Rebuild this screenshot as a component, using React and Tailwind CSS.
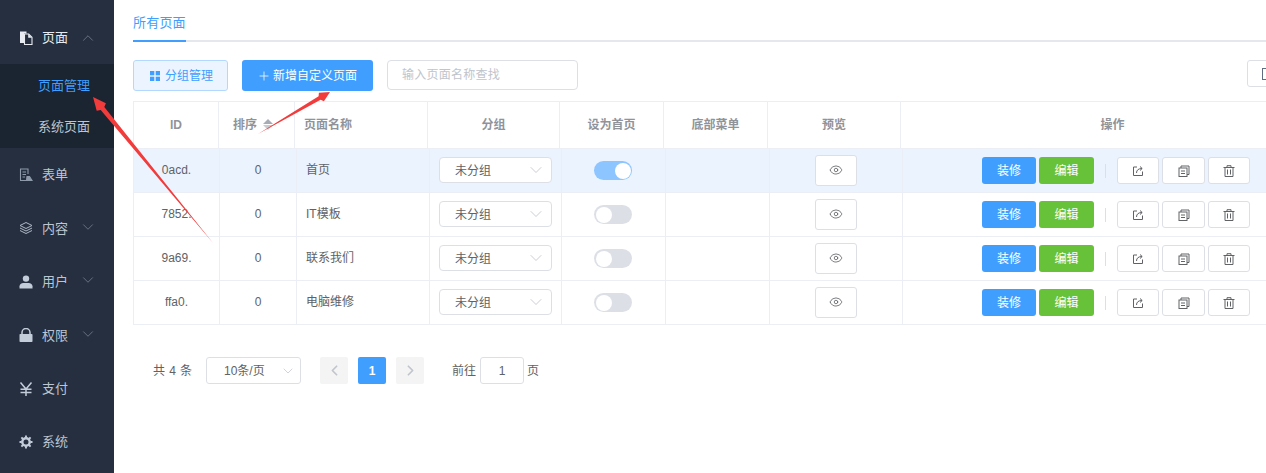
import React from 'react';
import { ChevronDown, ChevronLeft, ChevronRight, ChevronUp, Eye, Plus } from 'lucide-react';

const rows = [
  { id: '0acd.', name: '首页', active: true },
  { id: '7852.', name: 'IT模板' },
  { id: '9a69.', name: '联系我们' },
  { id: 'ffa0.', name: '电脑维修' },
];

function PagesIcon() {
  return (
    <svg viewBox="0 0 14 14" className="w-[14px] h-[14px]">
      <path d="M1 0.5h6.5v2H5v9.5H1z" fill="#e8ecf2" />
      <path d="M5.5 3h4.2l3.3 3.3V13.5H5.5z" fill="none" stroke="#e8ecf2" strokeWidth="1.1" />
      <path d="M9.2 3v3.8H13z" fill="#e8ecf2" />
    </svg>
  );
}

function FormIcon() {
  return (
    <svg viewBox="0 0 14 14" className="w-[14px] h-[14px]" fill="none" stroke="#8e99a9" strokeWidth="1.1">
      <path d="M8.5 12.5H1.5V1h7.5v5" />
      <path d="M3.5 4h3.5M3.5 6.5h3.5M3.5 9h2.5" />
      <path d="M8 8.5h2.5l2.5 4H7.5z" fill="#8e99a9" />
    </svg>
  );
}

function LayersIcon() {
  return (
    <svg viewBox="0 0 14 14" className="w-[14px] h-[14px]" fill="none" stroke="#aeb8c6" strokeWidth="1">
      <path d="M7 1.5l6 3-6 3-6-3z" />
      <path d="M1 7l6 3 6-3" />
      <path d="M1 9.5l6 3 6-3" />
    </svg>
  );
}

function UserIcon() {
  return (
    <svg viewBox="0 0 14 14" className="w-[14px] h-[14px]" fill="#c3ccd9">
      <circle cx="7" cy="3.6" r="3.2" />
      <path d="M0.5 13.5v-2.2c0-2 1.8-3.3 3.8-3.3h5.4c2 0 3.8 1.3 3.8 3.3v2.2z" />
    </svg>
  );
}

function LockIcon() {
  return (
    <svg viewBox="0 0 14 14" className="w-[14px] h-[14px]">
      <path d="M3 6.5V4.5a4 4 0 018 0v2" fill="none" stroke="#c3ccd9" strokeWidth="1.5" />
      <rect x="0.5" y="6" width="13" height="8" rx="0.8" fill="#c3ccd9" />
    </svg>
  );
}

function YenIcon() {
  return (
    <svg viewBox="0 0 14 14" className="w-[14px] h-[14px]" fill="none" stroke="#c3ccd9" strokeWidth="1.5">
      <path d="M1.5 0.5L7 7l5.5-6.5M7 7v7M1.5 7.2h11M1.5 10.4h11" />
    </svg>
  );
}

function GearIcon() {
  return (
    <svg viewBox="0 0 14 14" className="w-[14px] h-[14px]">
      <circle cx="7" cy="7" r="3.7" fill="none" stroke="#c3ccd9" strokeWidth="2.4" />
      <path d="M7 0.5v13M0.5 7h13M2.4 2.4l9.2 9.2M11.6 2.4l-9.2 9.2" stroke="#c3ccd9" strokeWidth="1.9" strokeDasharray="2.2 8.6" />
    </svg>
  );
}

function ShareIcon() {
  return (
    <svg viewBox="0 0 12 12" className="w-[12px] h-[12px]" fill="none" stroke="#606266" strokeWidth="1">
      <path d="M5 2H1.5v8.5h9V6.5" />
      <path d="M4.5 8c0-3 2-4.5 5.5-4.5M8 1.5l2.2 2L8 5.5" />
    </svg>
  );
}

function CopyIcon() {
  return (
    <svg viewBox="0 0 12 12" className="w-[12px] h-[12px]" fill="none" stroke="#606266" strokeWidth="1">
      <rect x="1" y="3" width="8" height="8.5" />
      <path d="M3 3V1h8v8.5H9M3 6h4M3 8.5h4" />
    </svg>
  );
}

function TrashIcon() {
  return (
    <svg viewBox="0 0 12 12" className="w-[12px] h-[12px]" fill="none" stroke="#606266" strokeWidth="1">
      <path d="M0.5 2.5h11M4 2.5V0.7h4v1.8M2 2.5v9h8v-9M4.5 4.5v5M7.5 4.5v5" />
    </svg>
  );
}

function MenuItem({ icon, label, open, arrow = true }) {
  return (
    <div className="h-[53.4px] flex items-center pl-[19px] shrink-0">
      <span className="w-[23px] flex">{icon}</span>
      <span className={`text-[13px] ${open ? 'text-[#e8ecf2]' : 'text-[#bcc6d3]'}`}>{label}</span>
      {arrow && (open
        ? <ChevronUp className="w-[18px] h-[18px] ml-[11px] text-[#7a8594]" strokeWidth={1} />
        : <ChevronDown className="w-[18px] h-[18px] ml-[11px] text-[#7a8594] -mt-[3px]" strokeWidth={1} />)}
    </div>
  );
}

function Sidebar() {
  return (
    <div className="w-[114px] h-[473px] shrink-0 bg-[#252f3f] pt-[11px] overflow-hidden flex flex-col">
      <MenuItem icon={<PagesIcon />} label="页面" open />
      <div className="bg-[#1b2431] h-[84px] shrink-0 flex flex-col justify-center pl-[38px] text-[13px] pb-[1px]">
        <div className="h-[41px] flex items-center text-[#409eff]">页面管理</div>
        <div className="h-[41px] flex items-center text-[#bcc6d3]">系统页面</div>
      </div>
      <MenuItem icon={<FormIcon />} label="表单" arrow={false} />
      <MenuItem icon={<LayersIcon />} label="内容" />
      <MenuItem icon={<UserIcon />} label="用户" />
      <MenuItem icon={<LockIcon />} label="权限" />
      <MenuItem icon={<YenIcon />} label="支付" arrow={false} />
      <MenuItem icon={<GearIcon />} label="系统" arrow={false} />
    </div>
  );
}

function HeadCell({ className, children }) {
  return (
    <div className={`${className} shrink-0 h-full border-r border-[#ebeef5] flex items-center text-[12px] font-bold text-[#909399]`}>
      {children}
    </div>
  );
}

function TableHead() {
  return (
    <div className="h-[48px] flex border-t border-b border-l border-[#ebeef5]">
      <HeadCell className="w-[85px] justify-center">ID</HeadCell>
      <HeadCell className="w-[76px] pl-[14px]">
        排序
        <svg viewBox="0 0 10 11" className="w-[10px] h-[11px] ml-[6px] -mt-[1px]">
          <path d="M5 0l5 5H0z" fill="#a8adb5" />
          <path d="M5 11L0 6h10z" fill="#c8ccd3" />
        </svg>
      </HeadCell>
      <HeadCell className="w-[133px] pl-[9px]">页面名称</HeadCell>
      <HeadCell className="w-[132px] justify-center">分组</HeadCell>
      <HeadCell className="w-[104px] justify-center">设为首页</HeadCell>
      <HeadCell className="w-[104px] justify-center">底部菜单</HeadCell>
      <HeadCell className="w-[133px] justify-center">预览</HeadCell>
      <HeadCell className="w-[424px] justify-center">操作</HeadCell>
    </div>
  );
}

function Cell({ className, children }) {
  return (
    <div className={`${className} shrink-0 h-full border-r border-[#ebeef5] flex items-center text-[12px] text-[#606266]`}>
      {children}
    </div>
  );
}

function IconButton({ className, children }) {
  return (
    <button className={`${className} h-[27px] bg-white border border-[#dcdfe6] rounded-[3px] flex items-center justify-center`}>
      {children}
    </button>
  );
}

function TableRow({ row }) {
  return (
    <div className={`h-[44px] flex border-b border-l border-[#ebeef5] ${row.active ? 'bg-[#ebf3fe]' : 'bg-white'}`}>
      <Cell className="w-[86px] justify-center pb-[2px]">{row.id}</Cell>
      <Cell className="w-[77px] justify-center pb-[2px]">0</Cell>
      <Cell className="w-[133px] pl-[9px] pb-[2px]">{row.name}</Cell>
      <Cell className="w-[132px] pl-[9px]">
        <div className="w-[113px] h-[26px] bg-white border border-[#dcdfe6] rounded-[4px] flex items-center justify-between pl-[15px] pr-[5px] -mt-[1px]">
          <span className="pt-[2px]">未分组</span>
          <ChevronDown className="w-[20px] h-[20px] text-[#c0c4cc]" strokeWidth={1} />
        </div>
      </Cell>
      <Cell className="w-[104px] justify-center pr-[1px]">
        <div className={`w-[38px] h-[19px] rounded-full flex items-center px-[1.5px] ${row.active ? 'bg-[#8cc5ff] justify-end' : 'bg-[#dcdfe6] justify-start'}`}>
          <span className="w-[16px] h-[16px] rounded-full bg-white" />
        </div>
      </Cell>
      <Cell className="w-[104px]" />
      <Cell className="w-[133px] justify-center">
        <button className="w-[42px] h-[31px] bg-white border border-[#dcdfe6] rounded-[3px] flex items-center justify-center">
          <Eye className="w-[14px] h-[14px] text-[#606266] -mt-[1px]" strokeWidth={1.4} />
        </button>
      </Cell>
      <div className="w-[424px] shrink-0 h-full flex items-center pl-[79px]">
        <button className="w-[54px] h-[27px] bg-[#409eff] rounded-[3px] text-white text-[12px]">装修</button>
        <button className="w-[55px] h-[27px] bg-[#67c23a] rounded-[3px] text-white text-[12px] ml-[3px]">编辑</button>
        <span className="w-px h-[14px] bg-[#dcdfe6] ml-[11px]" />
        <div className="flex gap-[3px] ml-[11px]">
          <IconButton className="w-[42px]"><ShareIcon /></IconButton>
          <IconButton className="w-[43px]"><CopyIcon /></IconButton>
          <IconButton className="w-[42px]"><TrashIcon /></IconButton>
        </div>
      </div>
    </div>
  );
}

function Pagination() {
  return (
    <div className="flex items-center h-[27px] mt-[32px] pl-[20px] text-[12px] text-[#606266]">
      <span className="w-[38px] whitespace-nowrap tracking-[0.4px]">共 4 条</span>
      <div className="w-[95px] h-[27px] ml-[15px] border border-[#dcdfe6] rounded-[3px] flex items-center justify-between pl-[17px] pr-[4px]">
        <span>10条/页</span>
        <ChevronDown className="w-[16px] h-[16px] text-[#c0c4cc]" strokeWidth={1.1} />
      </div>
      <button className="w-[28px] h-[27px] ml-[19px] bg-[#f4f4f5] rounded-[2px] flex items-center justify-center">
        <ChevronLeft className="w-[17px] h-[17px] text-[#c0c4cc]" strokeWidth={2.4} />
      </button>
      <button className="w-[28px] h-[27px] ml-[10px] bg-[#409eff] rounded-[2px] text-white font-bold">1</button>
      <button className="w-[28px] h-[27px] ml-[10px] bg-[#f4f4f5] rounded-[2px] flex items-center justify-center">
        <ChevronRight className="w-[17px] h-[17px] text-[#c0c4cc]" strokeWidth={2.4} />
      </button>
      <span className="ml-[28px]">前往</span>
      <div className="w-[44px] h-[27px] ml-[4px] border border-[#dcdfe6] rounded-[3px] flex items-center justify-center">1</div>
      <span className="ml-[3px]">页</span>
    </div>
  );
}

export default function App() {
  return (
    <div className="relative w-[1266px] h-[473px] overflow-hidden flex bg-white font-['Liberation_Sans','Noto_Sans_CJK_SC',sans-serif]">
      <Sidebar />
      <div className="flex-1 min-w-0 pl-[19px] overflow-hidden">
        <div className="h-[42px] border-b-2 border-[#e4e7ed] w-[1133px]">
          <div className="w-[53px] h-[42px] border-b-2 border-[#409eff] text-[13px] text-[#409eff] pt-[14px] leading-[17px] whitespace-nowrap tracking-[0.2px]">所有页面</div>
        </div>
        <div className="flex items-start mt-[18px] h-[31px] w-[1133px]">
          <button className="w-[95px] h-[31px] pl-[2px] bg-[#ecf5ff] border border-[#b3d8ff] rounded-[3px] text-[12px] text-[#409eff] flex items-center justify-center gap-[5px]">
            <svg viewBox="0 0 10 10" className="w-[10px] h-[10px]" fill="#409eff">
              <rect x="0" y="0" width="4.3" height="4.3" />
              <rect x="5.7" y="0" width="4.3" height="4.3" />
              <rect x="0" y="5.7" width="4.3" height="4.3" />
              <rect x="5.7" y="5.7" width="4.3" height="4.3" />
            </svg>
            分组管理
          </button>
          <button className="w-[131px] h-[31px] ml-[14px] bg-[#409eff] rounded-[3px] text-[12px] text-white flex items-center justify-center gap-[2px]">
            <Plus className="w-[14px] h-[14px] -ml-[1px]" strokeWidth={1.3} />
            新增自定义页面
          </button>
          <input
            placeholder="输入页面名称查找"
            className="w-[191px] h-[30px] ml-[14px] border border-[#dcdfe6] rounded-[4px] px-[14px] text-[12px] tracking-[0.25px] outline-none placeholder:text-[#c0c4cc]"
          />
          <button className="w-[42px] h-[27px] ml-auto mr-[-23px] border border-[#dcdfe6] rounded-[3px] shrink-0 flex items-center justify-center">
            <span className="w-[12px] h-[12px] border border-[#5f6b80]" />
          </button>
        </div>
        <div className="mt-[10px] w-[1200px]">
          <TableHead />
          {rows.map((row) => (
            <TableRow key={row.id} row={row} />
          ))}
        </div>
        <Pagination />
      </div>

      {/* red annotation arrows drawn over the screenshot */}
      <svg className="absolute inset-0 w-[1266px] h-[473px] pointer-events-none" viewBox="0 0 1266 473">
        <path d="M93 97L105.9 103.2 104.3 107.1 213 243 100.7 110.1 96.7 110.8z" fill="#f23b3b" />
        <path d="M330 92L323.9 101.3 320.6 99.8 258 134 318.6 96.3 318.9 92.7z" fill="#f23b3b" />
      </svg>
    </div>
  );
}
